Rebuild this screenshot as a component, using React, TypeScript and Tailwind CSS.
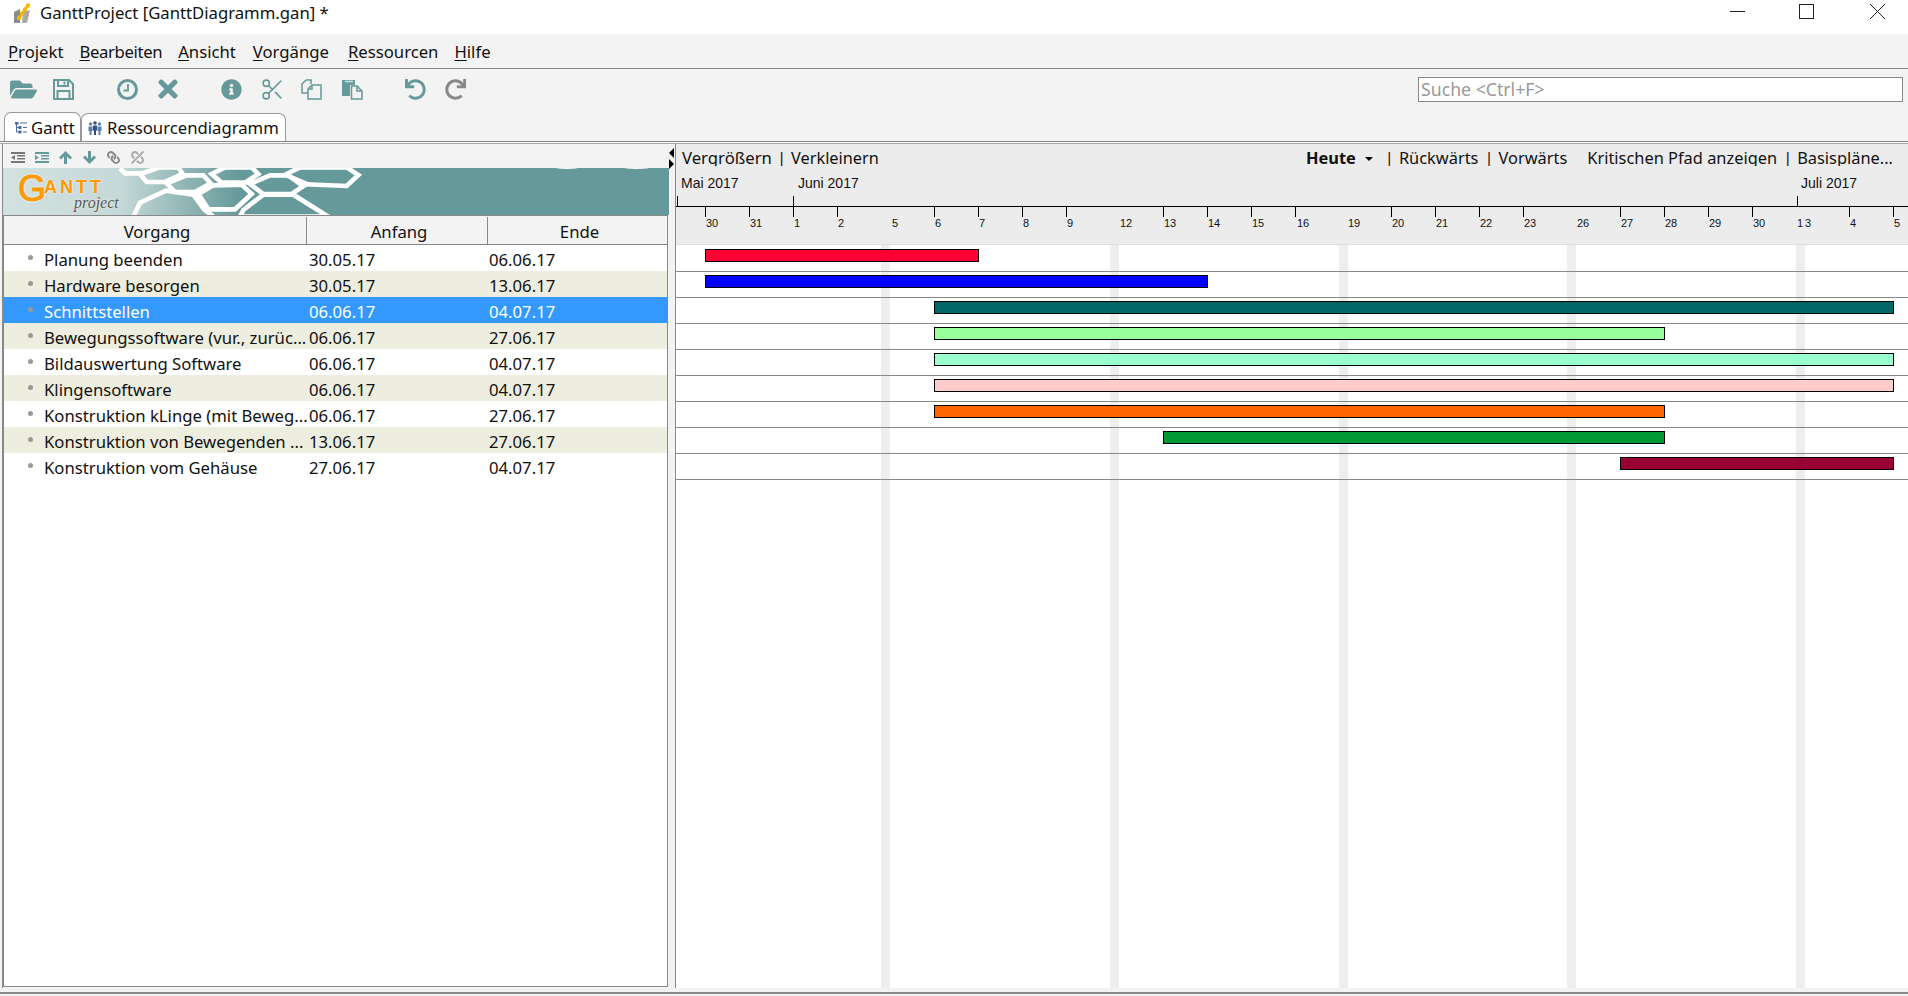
import { Scissors } from "lucide-react";
import { FaFolderOpen, FaInfoCircle, FaLink, FaRedo, FaTimes, FaUndo, FaUnlink } from "react-icons/fa";

const CHART_LEFT = 676;

const tasks = [
  { name: "Planung beenden", start: "30.05.17", end: "06.06.17", from: 705, to: 979, color: "#ff0033" },
  { name: "Hardware besorgen", start: "30.05.17", end: "13.06.17", from: 705, to: 1208, color: "#0000ff" },
  { name: "Schnittstellen", start: "06.06.17", end: "04.07.17", from: 934, to: 1894, color: "#006666" },
  { name: "Bewegungssoftware (vur., zurüc...", start: "06.06.17", end: "27.06.17", from: 934, to: 1665, color: "#99ff99" },
  { name: "Bildauswertung Software", start: "06.06.17", end: "04.07.17", from: 934, to: 1894, color: "#99ffcc" },
  { name: "Klingensoftware", start: "06.06.17", end: "04.07.17", from: 934, to: 1894, color: "#ffcccc" },
  { name: "Konstruktion kLinge (mit Beweg...", start: "06.06.17", end: "27.06.17", from: 934, to: 1665, color: "#ff6600" },
  { name: "Konstruktion von Bewegenden ...", start: "13.06.17", end: "27.06.17", from: 1163, to: 1665, color: "#009933" },
  { name: "Konstruktion vom Gehäuse", start: "27.06.17", end: "04.07.17", from: 1620, to: 1894, color: "#990033" },
];

const dayTicks = [
  705, 749, 793, 837, 934, 978, 1022, 1066, 1163, 1207, 1251, 1295, 1391, 1435, 1479, 1523, 1620, 1664, 1708, 1752,
  1849, 1893,
];

const dayLabels: [string, number][] = [
  ["30", 712], ["31", 756], ["1", 797], ["2", 841], ["5", 895], ["6", 938], ["7", 982], ["8", 1026], ["9", 1070],
  ["12", 1126], ["13", 1170], ["14", 1214], ["15", 1258], ["16", 1303], ["19", 1354], ["20", 1398], ["21", 1442],
  ["22", 1486], ["23", 1530], ["26", 1583], ["27", 1627], ["28", 1671], ["29", 1715], ["30", 1759], ["1", 1800],
  ["3", 1808], ["4", 1853], ["5", 1897],
];

const months: [string, number, number][] = [
  ["Mai 2017", 681, 677],
  ["Juni 2017", 798, 793],
  ["Juli 2017", 1801, 1797],
];

const weekends = [881, 1110, 1339, 1567, 1796];

const hexes = [
  "420,42 480,22 535,22 548,42 495,66 440,66",
  "635,42 675,22 755,22 775,42 735,68 665,68",
  "860,42 900,22 1040,22 1075,45 1040,78 900,72",
  "500,70 560,46 610,46 632,70 585,96 525,96",
  "750,72 810,46 860,46 920,72 875,102 790,102",
  "595,102 640,76 725,74 755,102 705,148 625,148",
  "730,150 790,104 880,104 985,170 720,170",
];

function Menu({ letter, rest, className }: { letter: string; rest: string; className?: string }) {
  return (
    <span className={className}>
      <span className="underline underline-offset-2">{letter}</span>
      {rest}
    </span>
  );
}

function AppIcon() {
  return (
    <svg width="17" height="21" viewBox="0 0 17 21" className="ml-[14px] mr-[9px] -mt-[8px]">
      <polygon points="0,9 6,6 6,20 0,20" fill="#8c8c8c" />
      <polygon points="9,9 16,7 13,20 8,20" fill="#aaaaaa" />
      <path d="M14 2 L5 15" stroke="#f5b800" strokeWidth="2.5" />
      <circle cx="14" cy="2.5" r="2.2" fill="#f5b800" />
      <circle cx="11" cy="6.5" r="2.2" fill="#f5b800" />
      <circle cx="8" cy="10.5" r="2.2" fill="#f5b800" />
      <circle cx="5" cy="15" r="2.2" fill="#f5b800" />
    </svg>
  );
}

function SaveIcon() {
  return (
    <svg width="21" height="21" viewBox="0 0 21 21" fill="none" stroke="#669999" strokeWidth="2">
      <path d="M1 1 H16 L20 5 V20 H1 Z" />
      <path d="M5 1 V7 H15 V1" />
      <path d="M11.5 2.5 V5.5" />
      <path d="M4.5 20 V12 H16.5 V20" />
    </svg>
  );
}

function ClockIcon() {
  return (
    <svg width="21" height="21" viewBox="0 0 21 21" fill="none" stroke="#669999">
      <circle cx="10.5" cy="10.5" r="9" strokeWidth="3" />
      <path d="M11 5 V11.5 H6.5" strokeWidth="1.8" />
    </svg>
  );
}

function CopyIcon() {
  return (
    <svg width="21" height="21" viewBox="0 0 21 21" fill="none" stroke="#669999" strokeWidth="1.5">
      <path d="M5 1 H10 V5 M5 1 L1 5 V14 H7" />
      <path d="M11 6 H20 V20 H7 V10 Z" fill="#f3f3f3" />
      <path d="M11 6 V10 H7" />
    </svg>
  );
}

function PasteIcon() {
  return (
    <svg width="21" height="21" viewBox="0 0 21 21">
      <path d="M0 1 H13 V6 H8 V17 H0 Z" fill="#669999" />
      <path d="M3 2.5 H11" stroke="#cfe0df" strokeWidth="1.5" />
      <path d="M9.5 7 H15 L20 12 V20 H9.5 Z" fill="#f3f3f3" stroke="#669999" strokeWidth="1.5" />
      <path d="M15 7 V12 H20" fill="none" stroke="#669999" strokeWidth="1.5" />
    </svg>
  );
}

function TreeIcon() {
  return (
    <svg width="12" height="12" viewBox="0 0 12 12" fill="none" stroke="#4a6aa0" strokeWidth="1" className="mr-[4px]">
      <path d="M1.5 1 V10 M1.5 5.5 H4 M1.5 10 H4" />
      <rect x="0" y="0" width="3" height="2" fill="#4a6aa0" />
      <rect x="4" y="4.5" width="2" height="2" fill="#4a6aa0" />
      <rect x="4" y="9" width="2" height="2" fill="#4a6aa0" />
      <path d="M5 1 H12 M8 5.5 H12 M8 10 H12" />
    </svg>
  );
}

function PeopleIcon() {
  return (
    <svg width="14" height="14" viewBox="0 0 14 14" className="mr-[5px]">
      <circle cx="2.5" cy="3" r="1.7" fill="#5b7fb5" />
      <circle cx="11.5" cy="3" r="1.7" fill="#5b7fb5" />
      <path d="M0.5 5.5 H4.5 V10 H3.5 V14 H1.5 V10 H0.5 Z" fill="#5b7fb5" />
      <path d="M9.5 5.5 H13.5 V10 H12.5 V14 H10.5 V10 H9.5 Z" fill="#5b7fb5" />
      <circle cx="7" cy="2" r="1.8" fill="#33507f" />
      <path d="M5 4.5 H9 V9.5 H8 V14 H6 V9.5 H5 Z" fill="#33507f" />
    </svg>
  );
}

function ArrowIcon({ down }: { down?: boolean }) {
  return (
    <svg width="13" height="13" viewBox="0 0 13 13" fill="#669999" className={down ? "rotate-180" : ""}>
      <path d="M6.5 0 L13 6.5 L11 8.5 L8 5.5 V13 H5 V5.5 L2 8.5 L0 6.5 Z" />
    </svg>
  );
}

function Banner() {
  return (
    <div className="relative h-[47px] overflow-hidden">
      <svg width="666" height="47" viewBox="9 24 1998 141" preserveAspectRatio="none" className="block">
        <defs>
          <linearGradient id="bannerFill" gradientUnits="userSpaceOnUse" x1="9" y1="0" x2="720" y2="0">
            <stop offset="0" stopColor="#d3e2e1" />
            <stop offset="0.5" stopColor="#c4d8d7" />
            <stop offset="1" stopColor="#669999" />
          </linearGradient>
        </defs>
        <rect x="9" y="24" width="1998" height="141" fill="url(#bannerFill)" />
        <polyline points="360,25 375,40 425,40" fill="none" stroke="#fff" strokeWidth="14" />
        <polyline points="400,170 420,128 498,92 580,104 612,148 640,170" fill="none" stroke="#fff" strokeWidth="14" />
        {hexes.map((points) => (
          <polygon key={points} points={points} fill="none" stroke="#fff" strokeWidth="14" strokeLinejoin="miter" />
        ))}
        <ellipse cx="1701" cy="22" rx="36" ry="5" fill="#fff" />
        <ellipse cx="1910" cy="22" rx="40" ry="5" fill="#fff" />
      </svg>
      <span className="absolute left-[15px] top-[4px] font-['Liberation_Sans',sans-serif] text-[36px] leading-[34px] text-[#ff9900] [-webkit-text-stroke:1px_#ff9900] [text-shadow:0_0_3px_#fff]">
        G
      </span>
      <span className="absolute left-[41px] top-[12px] font-['Liberation_Sans',sans-serif] text-[18px] font-bold leading-[14px] tracking-[3px] text-[#ff9900] [text-shadow:0_0_2px_#fff]">
        ANTT
      </span>
      <span className="absolute left-[71px] top-[27px] font-['Liberation_Serif',serif] text-[16px] italic leading-[16px] text-[#555] [text-shadow:0_0_2px_#fff]">
        project
      </span>
    </div>
  );
}

export default function App() {
  return (
    <div className="flex h-[996px] w-[1908px] flex-col overflow-hidden bg-[#f3f3f3] font-['Noto_Sans',sans-serif] text-[16.7px] text-[#111]">
      {/* Title bar */}
      <div className="flex h-[34px] items-center bg-white">
        <AppIcon />
        <span className="-mt-[8px]">GanttProject [GanttDiagramm.gan] *</span>
        <div className="ml-auto flex items-center">
          <div className="mb-[12px] h-px w-[15px] bg-[#222]" />
          <div className="-mt-[12px] ml-[54px] h-[15px] w-[15px] border border-[#222]" />
          <svg width="15" height="15" viewBox="0 0 15 15" className="-mt-[12px] ml-[56px] mr-[23px]" stroke="#222">
            <path d="M0 0 L15 15 M15 0 L0 15" />
          </svg>
        </div>
      </div>

      {/* Menu */}
      <div className="flex h-[35px] items-center gap-[16px] border-b border-[#888] pl-2 pt-[2px]">
        <Menu letter="P" rest="rojekt" />
        <Menu letter="B" rest="earbeiten" className="tracking-[-0.35px]" />
        <Menu letter="A" rest="nsicht" />
        <Menu letter="V" rest="orgänge" className="ml-px" />
        <Menu letter="R" rest="essourcen" className="ml-[3px]" />
        <Menu letter="H" rest="ilfe" />
      </div>

      {/* Toolbar */}
      <div className="flex h-[43px] items-center pb-[3px] text-[#669999]">
        <FaFolderOpen className="ml-[10px] text-[27px]" />
        <div className="ml-[16px]">
          <SaveIcon />
        </div>
        <div className="ml-[43px]">
          <ClockIcon />
        </div>
        <FaTimes className="ml-[16px] text-[28px]" />
        <FaInfoCircle className="ml-[39px] text-[21px]" />
        <Scissors className="ml-[18px] size-[25px]" strokeWidth={1.5} />
        <div className="ml-[16px]">
          <CopyIcon />
        </div>
        <div className="ml-[20px]">
          <PasteIcon />
        </div>
        <FaUndo className="ml-[42px] text-[21px]" />
        <FaRedo className="ml-[19px] text-[21px] text-[#888]" />
        <div className="ml-auto mr-[5px] flex h-[25px] w-[485px] items-center border border-[#888] bg-white pl-[2px] text-[17.7px] text-[#999]">
          Suche &lt;Ctrl+F&gt;
        </div>
      </div>

      {/* Tabs */}
      <div className="flex h-[29px] items-end pl-[4px]">
        <div className="flex h-[29px] w-[77px] items-center rounded-t-[7px] border border-b-0 border-[#999] bg-white pl-[10px] pt-px">
          <TreeIcon />
          Gantt
        </div>
        <div className="flex h-[28px] w-[205px] items-center rounded-t-[7px] border border-b-0 border-[#999] bg-white pl-[6px] pt-px">
          <PeopleIcon />
          Ressourcendiagramm
        </div>
      </div>
      <div className="h-[2px] border-t border-[#888]" />

      {/* Main */}
      <div className="flex h-[845px] border-t border-[#aaa]">
        {/* Task panel */}
        <div className="ml-[2px] flex w-[667px] flex-col border-l border-[#888]">
          <div className="flex h-[24px] items-center pt-[2px] text-[#669999]">
            <svg width="14" height="11" viewBox="0 0 14 11" className="ml-[8px]" fill="#777">
              <path d="M0 0 H14 V2 H0 Z M6 3 H14 V4.5 H6 Z M6 6 H14 V7.5 H6 Z M0 9 H14 V11 H0 Z M4 3 V8 L0 5.5 Z" />
            </svg>
            <svg width="14" height="11" viewBox="0 0 14 11" className="ml-[10px]" fill="#669999">
              <path d="M0 0 H14 V2 H0 Z M6 3 H14 V4.5 H6 Z M6 6 H14 V7.5 H6 Z M0 9 H14 V11 H0 Z M0 3 V8 L4 5.5 Z" />
            </svg>
            <div className="ml-[10px] flex gap-[11px]">
              <ArrowIcon />
              <ArrowIcon down />
            </div>
            <FaLink className="ml-[11px] -scale-x-100 text-[13px] text-[#888]" />
            <FaUnlink className="ml-[11px] -scale-x-100 text-[13px] text-[#aaa]" />
          </div>
          <Banner />
          <div className="flex h-[772px] w-[665px] flex-col border-x border-b border-[#888] bg-white">
            <div className="flex h-[30px] shrink-0 border-y border-[#888] bg-[#f3f3f3] pt-px text-center leading-[30px]">
              <div className="w-[303px] border-r border-[#888] pl-[4px]">Vorgang</div>
              <div className="w-[181px] border-r border-[#888] pl-[4px]">Anfang</div>
              <div className="flex-1 pl-[4px]">Ende</div>
            </div>
            {tasks.map((task, i) => (
              <div
                key={task.name}
                className={`flex h-[26px] shrink-0 items-center pt-[3px] ${
                  i === 2 ? "bg-[#3399ff] text-white" : i % 2 === 1 ? "bg-[#eeeee0]" : "bg-white"
                }`}
              >
                <div className="flex w-[305px] items-center overflow-hidden whitespace-nowrap">
                  <div className="ml-[24px] mr-[11px] -mt-[4px] size-[5px] shrink-0 rounded-full bg-[#999]" />
                  {task.name}
                </div>
                <div className="w-[180px]">{task.start}</div>
                <div>{task.end}</div>
              </div>
            ))}
          </div>
        </div>

        {/* Splitter */}
        <div className="relative w-[6px]">
          <div className="absolute left-0 top-[4px] size-0 border-y-[5px] border-r-[5px] border-y-transparent border-r-black" />
          <div className="absolute left-0 top-[15px] size-0 border-y-[5px] border-l-[5px] border-y-transparent border-l-black" />
        </div>

        {/* Chart */}
        <div className="flex flex-1 flex-col border-l border-[#888]">
          <div className="h-[101px] shrink-0 border-b border-[#ddd] bg-[#ececec]">
            <div className="flex h-[22px] items-start justify-between overflow-hidden pl-[6px] pr-[15px] leading-[28px]">
              <div className="flex gap-[5px]">
                <span>Vergrößern</span>
                <span>|</span>
                <span className="text-[16.3px]">Verkleinern</span>
              </div>
              <div className="flex items-center text-[16.4px]">
                <span className="font-bold">Heute</span>
                <span className="ml-[9px] mt-px size-0 border-x-[4px] border-t-[4px] border-x-transparent border-t-black" />
                <span className="ml-[12px]">|</span>
                <span className="ml-[5px]">Rückwärts</span>
                <span className="ml-[6px]">|</span>
                <span className="ml-[5px]">Vorwärts</span>
                <span className="ml-[20px]">Kritischen Pfad anzeigen</span>
                <span className="ml-[6px]">|</span>
                <span className="ml-[5px]">Basispläne...</span>
              </div>
            </div>
            {/* Timeline */}
            <div className="relative h-[78px] font-['Liberation_Sans',sans-serif]">
              {months.map(([label, x, tick]) => (
                <div key={label}>
                  <span
                    className="absolute top-[9px] text-[14px] leading-[16px]"
                    style={{ left: x - CHART_LEFT }}
                  >
                    {label}
                  </span>
                  <div className="absolute top-[30px] h-[10px] w-px bg-black" style={{ left: tick - CHART_LEFT }} />
                </div>
              ))}
              <div className="absolute inset-x-0 top-[40px] h-px bg-black" />
              {dayTicks.map((x) => (
                <div key={x} className="absolute top-[40px] h-[11px] w-px bg-black" style={{ left: x - CHART_LEFT }} />
              ))}
              {dayLabels.map(([label, x]) => (
                <span
                  key={`${label}-${x}`}
                  className="absolute top-[50px] w-[20px] -translate-x-1/2 text-center text-[11px] leading-[14px]"
                  style={{ left: x - CHART_LEFT }}
                >
                  {label}
                </span>
              ))}
            </div>
          </div>
          <div className="relative flex-1 bg-white">
            {weekends.map((x) => (
              <div
                key={x}
                className="absolute inset-y-0 w-[9px] bg-[#eeeeee]"
                style={{ left: x - CHART_LEFT }}
              />
            ))}
            <div className="relative flex flex-col pt-px">
              {tasks.map((task) => (
                <div key={task.name} className="h-[26px] border-b border-[#888] pt-[3px]">
                  <div
                    className="h-[13px] border border-black"
                    style={{
                      marginLeft: task.from - CHART_LEFT,
                      width: task.to - task.from,
                      backgroundColor: task.color,
                    }}
                  />
                </div>
              ))}
            </div>
          </div>
        </div>
      </div>

      <div className="mt-[4px] h-[2px] bg-[#888]" />
    </div>
  );
}
